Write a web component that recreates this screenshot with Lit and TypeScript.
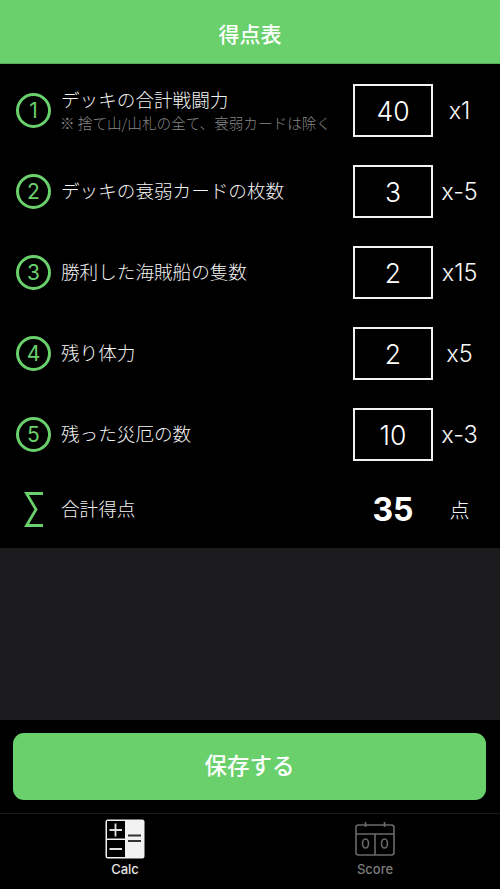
import { LitElement, html, css, svg } from "lit";
import { customElement } from "lit/decorators.js";

const rows = [
  { n: "1", label: "デッキの合計戦闘力", sub: "※ 捨て山/山札の全て、衰弱カードは除く", value: "40", mult: "x1" },
  { n: "2", label: "デッキの衰弱カードの枚数", sub: "", value: "3", mult: "x-5" },
  { n: "3", label: "勝利した海賊船の隻数", sub: "", value: "2", mult: "x15" },
  { n: "4", label: "残り体力", sub: "", value: "2", mult: "x5" },
  { n: "5", label: "残った災厄の数", sub: "", value: "10", mult: "x-3" },
];

@customElement("app-root")
export class AppRoot extends LitElement {
  static styles = css`
    :host {
      display: flex;
      flex-direction: column;
      width: 500px;
      height: 889px;
      background: #000;
      color: #fff;
      font-family: Inter, "Noto Sans CJK JP", sans-serif;
      overflow: hidden;
    }
    .jp { font-family: "Noto Sans CJK JP", sans-serif; }
    header {
      height: 64px;
      border-bottom: 1px solid #57ad59;
      background: #69d06b;
      display: flex;
      align-items: center;
      justify-content: center;
      font-size: 21px;
      font-weight: 500;
      padding-top: 2px;
      box-sizing: border-box;
    }
    .list { padding-top: 6px; }
    .row {
      height: 81px;
      display: flex;
      align-items: center;
      padding-left: 16px;
    }
    .num {
      width: 35px;
      height: 35px;
      flex: none;
      box-sizing: border-box;
      border: 3px solid #69d06b;
      border-radius: 50%;
      color: #69d06b;
      font-size: 21px;
      display: flex;
      align-items: center;
      justify-content: center;
    }
    .text { flex: 1; margin-left: 10px; min-width: 0; color: #f4f4f4; padding-bottom: 4px; }
    .text.has-sub { padding-bottom: 0; }
    .label { font-size: 18.6px; line-height: 24px; white-space: nowrap; font-weight: 300; }
    .sub { font-size: 14.6px; line-height: 24px; color: #858585; white-space: nowrap; margin-left: -1px; font-weight: 300; }
    .box {
      width: 80px;
      height: 53px;
      flex: none;
      box-sizing: border-box;
      border: 2px solid #f2f2f2;
      display: flex;
      align-items: center;
      justify-content: center;
      font-size: 26.500px;
      font-weight: 300;
    }
    .mult {
      width: 53px;
      margin-right: 14px;
      flex: none;
      text-align: center;
      font-size: 23.500px;
      font-weight: 300;
      color: #f8f8f8;
    }
    .total { height: 73px; padding-bottom: 4px; box-sizing: border-box; }
    .sigma { width: 35px; height: 35px; flex: none; display: block; }
    .sum { color: #fff; font-weight: 700; font-size: 32px; border: 0; }
    .unit { font-size: 20px; }
    .filler { height: 172px; background: #1c1c1e; flex: none; }
    .action { height: 93px; flex: none; padding: 13px 14px 13px 13px; box-sizing: border-box; }
    button {
      display: block;
      width: 100%;
      height: 67px;
      border: 0;
      border-radius: 11px;
      background: #69d06b;
      color: #fff;
      font: 500 22.500px "Noto Sans CJK JP", sans-serif;
      padding: 0 0 5px;
    }
    nav {
      flex: 1;
      display: flex;
      border-top: 1px solid #1a1a1a;
    }
    .tab {
      flex: 1;
      display: flex;
      flex-direction: column;
      align-items: center;
      padding-top: 5px;
      font-size: 13px;
      font-weight: 500;
      color: #7d7d7d;
    }
    .tab.on { color: #e6e6e6; }
    .tab svg { display: block; width: 40px; height: 40px; margin-bottom: 2px; }
  `;

  private calcIcon() {
    return svg`
      <svg viewBox="0 0 40 40" fill="none">
        <rect x="0.500" y="0.500" width="39" height="39" rx="2.500" fill="#f2f2f2"/>
        <rect x="2" y="2" width="18" height="17.500" fill="#000"/>
        <rect x="2" y="21" width="18" height="17" fill="#000"/>
        <path d="M4.500 11h12.500M10.500 4.500v13M4.500 30h12.500" stroke="#e2e2e2" stroke-width="1.800"/>
        <path d="M23 16.500h13M23 22h13" stroke="#333" stroke-width="1.800"/>
      </svg>`;
  }

  private scoreIcon() {
    return svg`
      <svg viewBox="0 0 40 40" fill="none" stroke="#6a6a6a" stroke-width="1.600">
        <rect x="1" y="6" width="38" height="30" rx="2.500"/>
        <path d="M1 15h38M20 15v21M10.500 3v5M29.500 3v5"/>
        <ellipse cx="10.500" cy="24.500" rx="3" ry="4.500"/>
        <ellipse cx="29.500" cy="24.500" rx="3" ry="4.500"/>
      </svg>`;
  }

  render() {
    return html`
      <header class="jp">得点表</header>
      <div class="list">
        ${rows.map(
          (r) => html`
            <div class="row">
              <div class="num">${r.n}</div>
              <div class="text jp ${r.sub ? "has-sub" : ""}">
                <div class="label">${r.label}</div>
                ${r.sub ? html`<div class="sub">${r.sub}</div>` : ""}
              </div>
              <div class="box">${r.value}</div>
              <div class="mult">${r.mult}</div>
            </div>
          `
        )}
        <div class="row total">
          <svg class="sigma" viewBox="0 0 35 35" fill="none" stroke="#69d06b" stroke-width="2.800">
            <path d="M27 1.500H10.500L20 17.500 10.500 33.500H27"/>
          </svg>
          <div class="text jp"><div class="label">合計得点</div></div>
          <div class="box sum">35</div>
          <div class="mult jp unit">点</div>
        </div>
      </div>
      <div class="filler"></div>
      <div class="action"><button>保存する</button></div>
      <nav>
        <div class="tab on">${this.calcIcon()}<span>Calc</span></div>
        <div class="tab">${this.scoreIcon()}<span>Score</span></div>
      </nav>
    `;
  }
}
